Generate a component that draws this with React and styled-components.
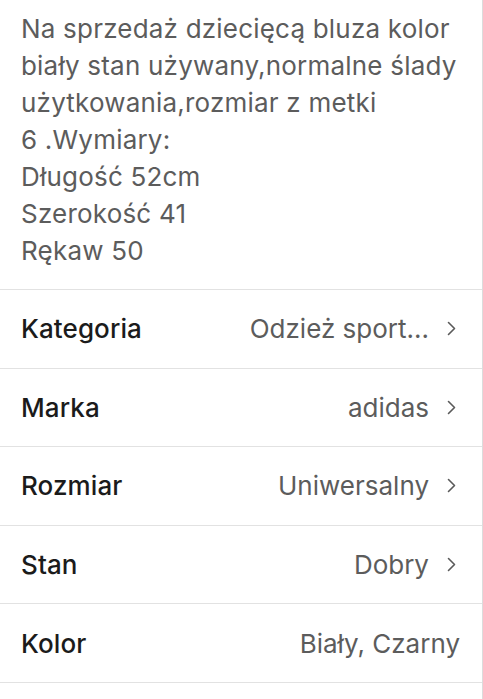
import React from "react";
import styled, { createGlobalStyle } from "styled-components";

const GlobalStyle = createGlobalStyle`
  html, body {
    margin: 0;
    padding: 0;
    background: #ffffff;
  }
  body {
    font-family: Inter, "Noto Sans", "Liberation Sans", sans-serif;
  }
`;

const Page = styled.div`
  width: 482px;
  min-height: 699px;
  border-right: 1px solid #dcdcdc;
  background: #ffffff;
`;

const Description = styled.p`
  margin: 0;
  padding: 10px 8px 20px 21px;
  font-size: 26px;
  line-height: 37px;
  letter-spacing: 0.2px;
  color: #5c5c5c;
  white-space: pre-line;
`;

const List = styled.ul`
  list-style: none;
  margin: 0;
  padding: 0;
  border-top: 1px solid #e2e2e2;
`;

const Row = styled.li`
  display: flex;
  align-items: center;
  justify-content: space-between;
  height: 77.6px;
  padding: 0 22px 0 21px;
  border-bottom: 1px solid #e2e2e2;
`;

const Label = styled.span`
  font-size: 26px;
  font-weight: 500;
  color: #1b1b1b;
  letter-spacing: 0.1px;
`;

const Value = styled.span`
  display: flex;
  align-items: center;
  gap: ${(p) => (p.$link ? "18px" : "0")};
  font-size: 26px;
  color: #5c5c5c;
  margin-right: ${(p) => (p.$link ? "4px" : "0")};
`;

const Chevron = () => (
  <svg width="9" height="15" viewBox="0 0 9 15" fill="none">
    <path d="M1.5 1.5L7.5 7.5L1.5 13.5" stroke="#5a5a5a" strokeWidth="1.6" strokeLinecap="round" strokeLinejoin="round" />
  </svg>
);

const details = [
  { label: "Kategoria", value: "Odzież sport...", link: true },
  { label: "Marka", value: "adidas", link: true },
  { label: "Rozmiar", value: "Uniwersalny", link: true },
  { label: "Stan", value: "Dobry", link: true },
  { label: "Kolor", value: "Biały, Czarny", link: false },
];

const text = `Na sprzedaż dziecięcą bluza kolor
biały stan używany,normalne ślady
użytkowania,rozmiar z metki
6 .Wymiary:
Długość 52cm
Szerokość 41
Rękaw 50`;

export default function App() {
  return (
    <Page>
      <GlobalStyle />
      <Description>{text}</Description>
      <List>
        {details.map((d) => (
          <Row key={d.label}>
            <Label>{d.label}</Label>
            <Value $link={d.link}>
              {d.value}
              {d.link && <Chevron />}
            </Value>
          </Row>
        ))}
      </List>
    </Page>
  );
}
